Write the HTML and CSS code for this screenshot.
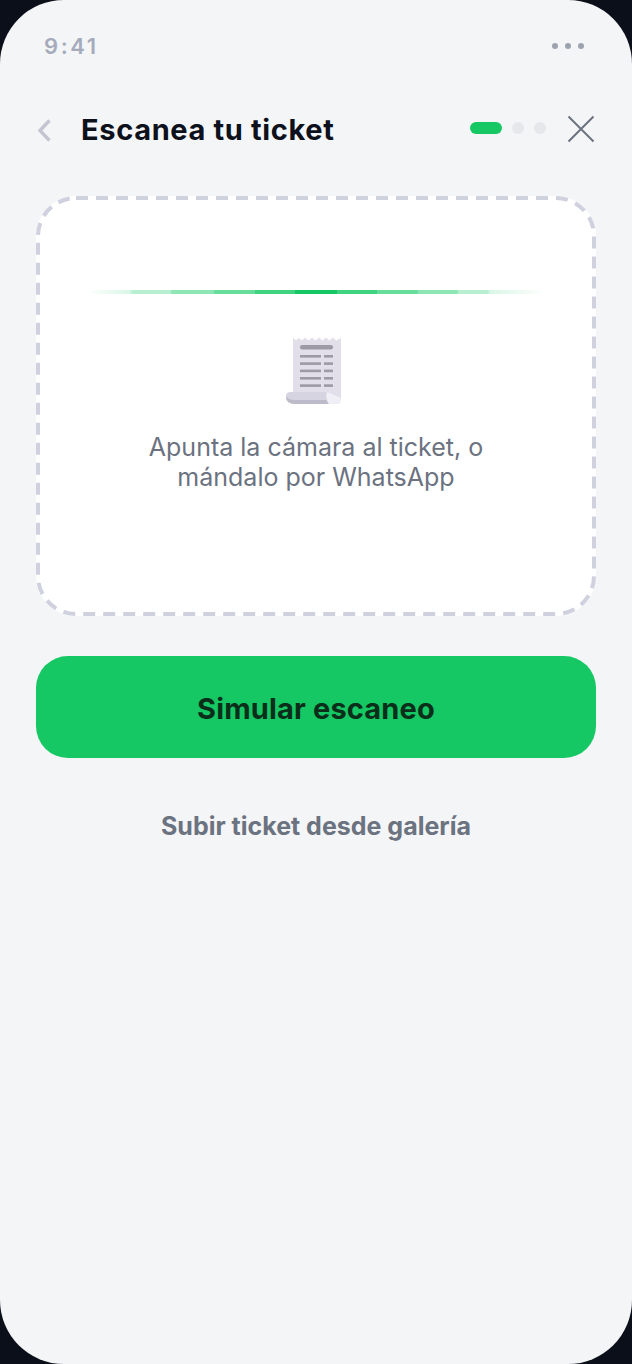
FILE: index.html
```html
<!DOCTYPE html>
<html lang="es">

<head>
    <meta charset="UTF-8">
    <meta name="viewport" content="width=device-width, initial-scale=1.0">
    <title>Escanea tu ticket</title>
    <link rel="stylesheet" href="styles.css">
</head>

<body>
    <div class="phone">
        <div class="status">
            <span class="status__time">9:41</span>
            <span class="status__dots"><i></i><i></i><i></i></span>
        </div>

        <header class="head">
            <svg class="head__back" width="15" height="23" viewBox="0 0 15 23">
                <path d="M12.500 1.500 3 11.500l9.500 10" fill="none" stroke="#c6c4d1" stroke-width="3.4" />
            </svg>
            <h1 class="head__title">Escanea tu ticket</h1>
            <div class="steps">
                <i class="steps__on"></i><i></i><i></i>
            </div>
            <svg class="head__close" width="28" height="28" viewBox="0 0 28 28">
                <path d="M1.5 1.5 26.500 26.500M26.500 1.500 1.500 26.500" fill="none" stroke="#6b7280" stroke-width="2" />
            </svg>
        </header>

        <section class="scan">
            <!-- borde discontinuo: con border no salen los guiones de 12/8 -->
            <svg class="scan__border" viewBox="0 0 560 420">
                <rect x="2" y="2" width="556" height="416" rx="38" fill="none" stroke="#cfd1df" stroke-width="4" stroke-dasharray="12 8" />
            </svg>
            <div class="scan__line"></div>
            <svg class="scan__ticket" width="58" height="70" viewBox="0 0 58 70">
                <path d="M7 2 10 4.500 13 2 16 4.500 19 1.500 22.500 4.500 26 1.500 29.500 4.500 33 1.500 36.500 4.500 40 1.500 43.500 4.500 47 1.500 50 4.500 55 2V63q0 5-5 5H7Z" fill="#e2dfea" />
                <path d="M0 60q0-4 5-4h36q-2 6 2 12H9q-9 0-9-8Z" fill="#d6d4e0" />
                <path d="M0 60q0 8 9 8h34q-2-2-2.500-4H9q-7 0-9-4Z" fill="#bdbbca" />
                <path d="M41 56l14 6q0 6-6 6h-6q-4-6-2-12Z" fill="#f0eff5" />
                <rect x="14" y="9" width="33" height="4.500" rx="2.200" fill="#9c9aa6" />
                <g fill="#9c9aa6">
                    <rect x="14" y="19" width="21" height="2.600" />
                    <rect x="38" y="19" width="9" height="2.600" />
                    <rect x="14" y="26.300" width="21" height="2.600" />
                    <rect x="38" y="26.300" width="9" height="2.600" />
                    <rect x="14" y="33.600" width="21" height="2.600" />
                    <rect x="38" y="33.600" width="9" height="2.600" />
                    <rect x="14" y="41" width="21" height="2.600" />
                    <rect x="38" y="41" width="9" height="2.600" />
                    <rect x="14" y="48.300" width="21" height="2.600" />
                    <rect x="38" y="48.300" width="9" height="2.600" />
                </g>
            </svg>
            <p class="scan__text">Apunta la cámara al ticket, o<br>mándalo por WhatsApp</p>
        </section>

        <button class="btn-main">Simular escaneo</button>
        <a class="link-gallery">Subir ticket desde galería</a>
    </div>
</body>

</html>
```

FILE: styles.css
```css
* {
    box-sizing: border-box;
}

html,
body {
    margin: 0;
    height: 100%;
    background: #0b0f19;
}

.phone {
    height: 1364px;
    padding: 0 36px;
    display: flex;
    flex-direction: column;
    background: #f4f5f7;
    border-radius: 64px;
    font-family: Inter, "Noto Sans", sans-serif;
}

/* barra de estado */
.status {
    height: 92px;
    padding: 0 12px 0 8px;
    display: flex;
    align-items: center;
    justify-content: space-between;
}

.status__time {
    font-size: 22px;
    font-weight: 600;
    letter-spacing: 2.6px;
    color: #a5abbb;
}

.status__dots {
    display: flex;
    gap: 7px;
}

.status__dots i {
    width: 6px;
    height: 6px;
    border-radius: 50%;
    background: #9ca3af;
}

/* cabecera */
.head {
    height: 76px;
    display: flex;
    align-items: center;
}

.head__back {
    margin-left: 1px;
    flex: none;
}

.head__title {
    flex: 1;
    margin: 0 0 2px 29px;
    font-size: 29px;
    font-weight: 700;
    letter-spacing: .65px;
    color: #0d111c;
}

.steps {
    display: flex;
    align-items: center;
    gap: 10px;
    margin: 0 21px 4px 0;
}

.steps i {
    width: 12px;
    height: 12px;
    border-radius: 6px;
    background: #e5e7eb;
}

.steps .steps__on {
    width: 32px;
    background: #16c864;
}

.head__close {
    margin: 0 1px 2px 0;
    flex: none;
}

/* zona de escaneo */
.scan {
    position: relative;
    height: 420px;
    margin-top: 28px;
    padding-top: 94px;
    display: flex;
    flex-direction: column;
    align-items: center;
    background: #fff;
    border-radius: 40px;
}

.scan__border {
    position: absolute;
    top: 0;
    left: 0;
    width: 100%;
    height: 100%;
}

.scan__line {
    width: 458px;
    height: 4px;
    background: linear-gradient(90deg,
            #fff 0, #d9f6e6 43px, #b8efd0 45px, #b8efd0 83px, #8fe6b5 85px, #8fe6b5 126px,
            #66dd9b 128px, #66dd9b 168px, #3ed281 168px, #3ed281 208px, #16c864 208px, #16c864 250px,
            #3ed281 250px, #3ed281 290px, #66dd9b 290px, #66dd9b 330px, #8fe6b5 332px, #8fe6b5 370px,
            #b8efd0 372px, #b8efd0 401px, #d9f6e6 403px, #fff 100%);
}

.scan__ticket {
    margin: 42px 0 0 -2px;
}

.scan__text {
    margin: 26px 0 0;
    font-size: 25px;
    line-height: 30px;
    text-align: center;
    color: #6b7280;
}

/* acciones */
.btn-main {
    height: 102px;
    margin-top: 40px;
    padding-top: 4px;
    border: 0;
    border-radius: 32px;
    background: #16c864;
    font-family: inherit;
    font-size: 29px;
    font-weight: 700;
    letter-spacing: .15px;
    color: #0a2e1a;
}

.link-gallery {
    margin-top: 53px;
    font-size: 25px;
    font-weight: 700;
    text-align: center;
    color: #6b7280;
}
```
